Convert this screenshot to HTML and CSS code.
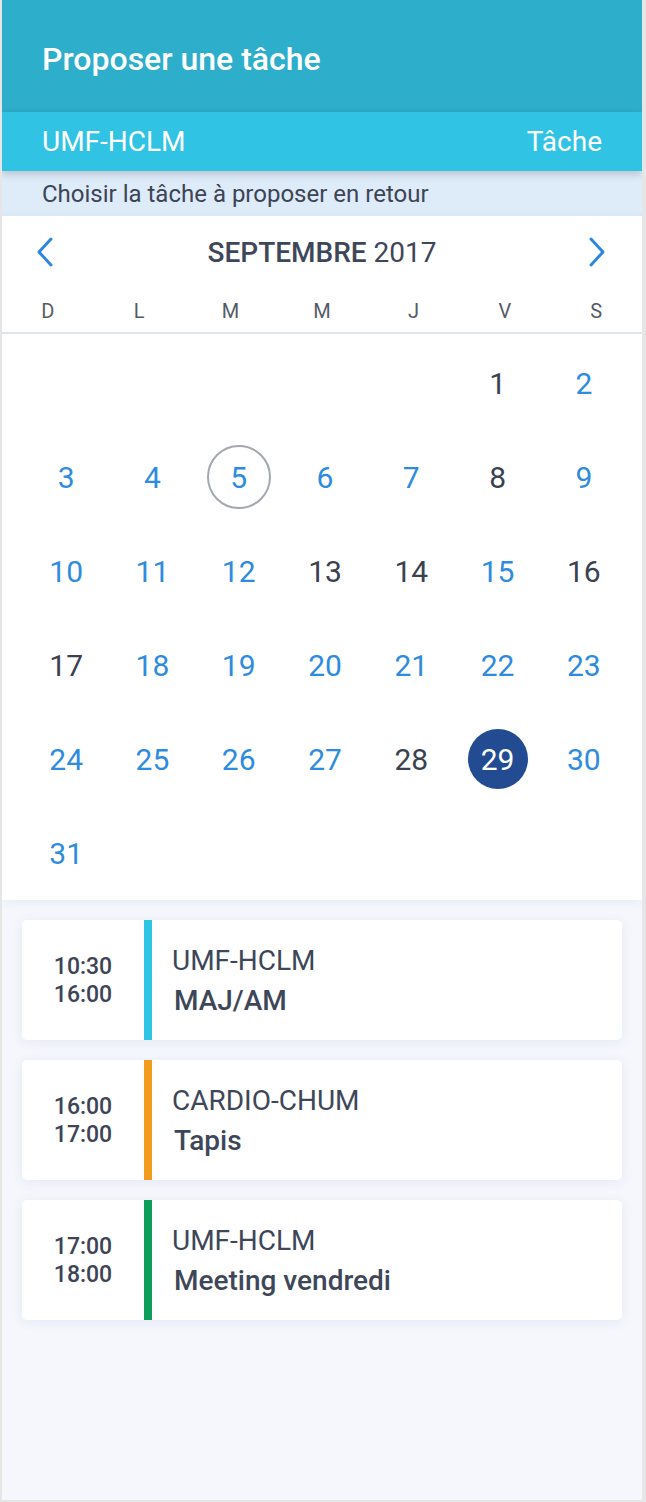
FILE: index.html
```html
<!DOCTYPE html>
<html lang="fr">
<head>
<meta charset="utf-8">
<title>Proposer une tâche</title>
<link rel="stylesheet" href="styles.css">
</head>
<body>
<div class="app">
  <header class="topbar">
    <h1 class="title">Proposer une tâche</h1>
  </header>
  <div class="subbar">
    <span>UMF-HCLM</span>
    <span>Tâche</span>
  </div>
  <div class="info">Choisir la tâche à proposer en retour</div>

  <section class="calendar">
    <div class="month-nav">
      <svg class="arrow" width="18" height="30" viewBox="0 0 18 30"><path d="M15 2 L3 15 L15 28" fill="none" stroke="#2d86df" stroke-width="3" stroke-linecap="round" stroke-linejoin="round"/></svg>
      <div class="month"><b>SEPTEMBRE</b> 2017</div>
      <svg class="arrow" width="18" height="30" viewBox="0 0 18 30"><path d="M3 2 L15 15 L3 28" fill="none" stroke="#2d86df" stroke-width="3" stroke-linecap="round" stroke-linejoin="round"/></svg>
    </div>
    <div class="weekdays">
      <span>D</span><span>L</span><span>M</span><span>M</span><span>J</span><span>V</span><span>S</span>
    </div>
    <div class="grid">
      <span></span><span></span><span></span><span></span><span></span>
      <span class="d dark">1</span><span class="d">2</span>
      <span class="d">3</span><span class="d">4</span><span class="d today">5</span><span class="d">6</span><span class="d">7</span><span class="d dark">8</span><span class="d">9</span>
      <span class="d">10</span><span class="d">11</span><span class="d">12</span><span class="d dark">13</span><span class="d dark">14</span><span class="d">15</span><span class="d dark">16</span>
      <span class="d dark">17</span><span class="d">18</span><span class="d">19</span><span class="d">20</span><span class="d">21</span><span class="d">22</span><span class="d">23</span>
      <span class="d">24</span><span class="d">25</span><span class="d">26</span><span class="d">27</span><span class="d dark">28</span><span class="d selected">29</span><span class="d">30</span>
      <span class="d">31</span>
    </div>
  </section>

  <section class="events">
    <div class="card">
      <div class="time">10:30<br>16:00</div>
      <div class="bar cyan"></div>
      <div class="body">
        <div class="org">UMF-HCLM</div>
        <div class="task">MAJ/AM</div>
      </div>
    </div>
    <div class="card">
      <div class="time">16:00<br>17:00</div>
      <div class="bar orange"></div>
      <div class="body">
        <div class="org">CARDIO-CHUM</div>
        <div class="task">Tapis</div>
      </div>
    </div>
    <div class="card">
      <div class="time">17:00<br>18:00</div>
      <div class="bar green"></div>
      <div class="body">
        <div class="org">UMF-HCLM</div>
        <div class="task">Meeting vendredi</div>
      </div>
    </div>
  </section>
</div>
</body>
</html>
```

FILE: styles.css
```css
* { box-sizing: border-box; }
html, body { margin: 0; padding: 0; }
body {
  background: #e6e6e6;
  font-family: Roboto, "Noto Sans", sans-serif;
  color: #3c4456;
  width: 646px;
  height: 1502px;
}
.app {
  margin-left: 2px;
  width: 640px;
  height: 1500px;
  background: #f5f7fc;
  display: flex;
  flex-direction: column;
  overflow: hidden;
}
.topbar {
  height: 112px;
  background: #2daecb;
  display: flex;
  align-items: center;
  padding: 0 40px;
}
.title {
  margin: 0;
  color: #fff;
  font-size: 32px;
  font-weight: 500;
  padding-top: 5px;
}
.subbar {
  height: 59px;
  background: #31c3e3;
  color: #fff;
  display: flex;
  justify-content: space-between;
  align-items: center;
  padding: 0 40px 0 40px;
  font-size: 28px;
  position: relative;
  z-index: 2;
  box-shadow: 0 3px 8px rgba(0, 0, 0, 0.18);
}
.info {
  height: 45px;
  background: #deebf8;
  font-size: 24px;
  display: flex;
  align-items: center;
  padding: 0 40px;
  color: #3c4456;
}
.calendar {
  background: #fff;
  position: relative;
  z-index: 1;
  box-shadow: 0 2px 10px rgba(70, 90, 170, 0.08);
}
.month-nav {
  height: 72px;
  display: flex;
  align-items: center;
  justify-content: space-between;
  padding: 0 36px 0 34px;
}
.arrow { display: block; }
.month {
  font-size: 28px;
  color: #3e4759;
  padding-left: 2px;
}
.month b { font-weight: 500; }
.weekdays {
  margin-top: 4px;
  height: 42px;
  display: grid;
  grid-template-columns: repeat(7, 1fr);
  align-items: center;
  border-bottom: 2px solid #dfe5f0;
  font-size: 20px;
  color: #555b66;
  text-align: center;
  padding-bottom: 2px;
}
.grid {
  padding: 2px 15px 0 21px;
  display: grid;
  grid-template-columns: repeat(7, 1fr);
  grid-auto-rows: 94px;
}
.d {
  display: flex;
  align-items: center;
  justify-content: center;
  font-size: 30px;
  color: #2e8be0;
  position: relative;
}
.d.dark { color: #3a4150; }
.d.today::before,
.d.selected::before {
  content: "";
  position: absolute;
  width: 60px;
  height: 60px;
  border-radius: 50%;
  left: 50%;
  top: 50%;
  transform: translate(-50%, -50%);
}
.d.today::before { border: 2px solid #a3a7af; }
.d.selected { color: #fff; z-index: 0; }
.d.selected::before { background: #224b91; z-index: -1; }
.events {
  flex: 1;
  padding: 20px 20px;
  display: flex;
  flex-direction: column;
  gap: 20px;
}
.card {
  height: 120px;
  background: #fff;
  border-radius: 5px;
  display: flex;
  box-shadow: 0 2px 12px rgba(70, 90, 170, 0.09);
  overflow: hidden;
}
.time {
  width: 122px;
  display: flex;
  align-items: center;
  justify-content: center;
  text-align: center;
  font-size: 23px;
  font-weight: 500;
  line-height: 28px;
  color: #3c4456;
  padding-top: 2px;
}
.bar { width: 8px; }
.bar.cyan { background: #2ec4e4; }
.bar.orange { background: #f29c1f; }
.bar.green { background: #0f9d5a; }
.body {
  padding-left: 20px;
  display: flex;
  flex-direction: column;
  justify-content: center;
  padding-top: 2px;
}
.org {
  font-size: 28px;
  line-height: 40px;
  color: #3e4759;
}
.task {
  font-size: 28px;
  font-weight: 500;
  line-height: 40px;
  color: #3e4759;
  padding-left: 2px;
}
```
